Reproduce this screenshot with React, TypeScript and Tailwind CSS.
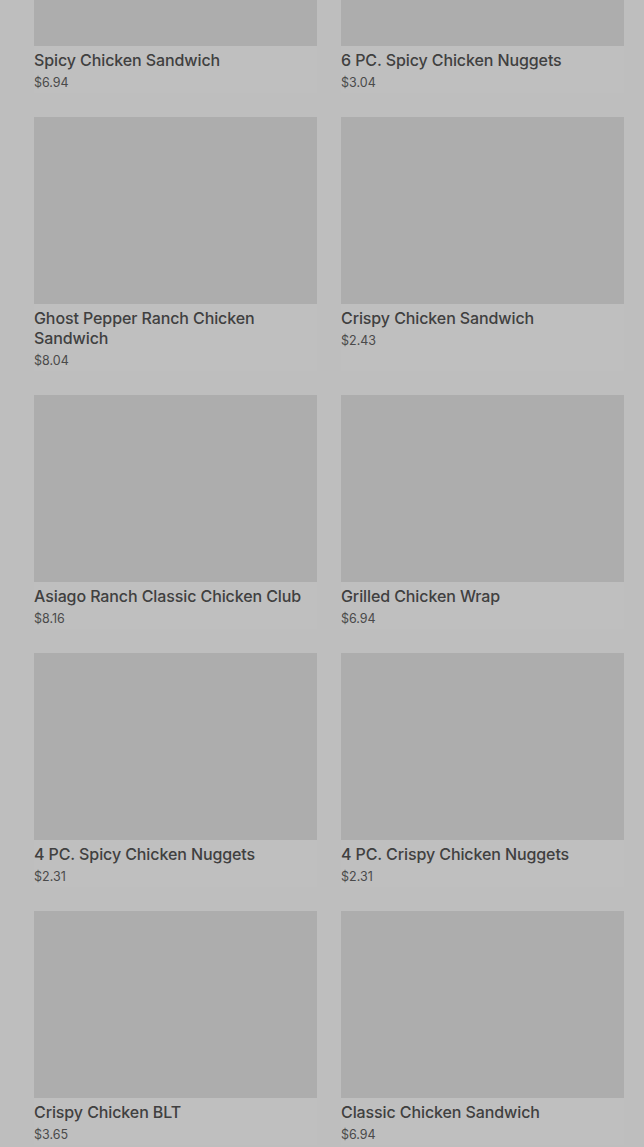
const items = [
  { name: "Spicy Chicken Sandwich", price: "$6.94" },
  { name: "6 PC. Spicy Chicken Nuggets", price: "$3.04" },
  { name: "Ghost Pepper Ranch Chicken Sandwich", price: "$8.04" },
  { name: "Crispy Chicken Sandwich", price: "$2.43" },
  { name: "Asiago Ranch Classic Chicken Club", price: "$8.16" },
  { name: "Grilled Chicken Wrap", price: "$6.94" },
  { name: "4 PC. Spicy Chicken Nuggets", price: "$2.31" },
  { name: "4 PC. Crispy Chicken Nuggets", price: "$2.31" },
  { name: "Crispy Chicken BLT", price: "$3.65" },
  { name: "Classic Chicken Sandwich", price: "$6.94" },
];

export default function App() {
  return (
    <div className="w-[644px] h-[1147px] overflow-hidden bg-[#bebebe] font-['Inter',sans-serif]">
      <div className="grid grid-cols-2 gap-x-6 gap-y-6 pl-[34px] pr-[20px] mt-[-141px]">
        {items.map((item) => (
          <div key={item.name} className="flex flex-col bg-[#bfbfbf]">
            <div className="h-[187px] bg-[#adadad]" />
            <h3 className="mt-1 text-base leading-5 font-medium tracking-[-0.1px] text-[#404040]">{item.name}</h3>
            <p className="mt-[3px] text-[12.5px] leading-5 text-[#4a4a4a]">{item.price}</p>
          </div>
        ))}
      </div>
    </div>
  );
}
